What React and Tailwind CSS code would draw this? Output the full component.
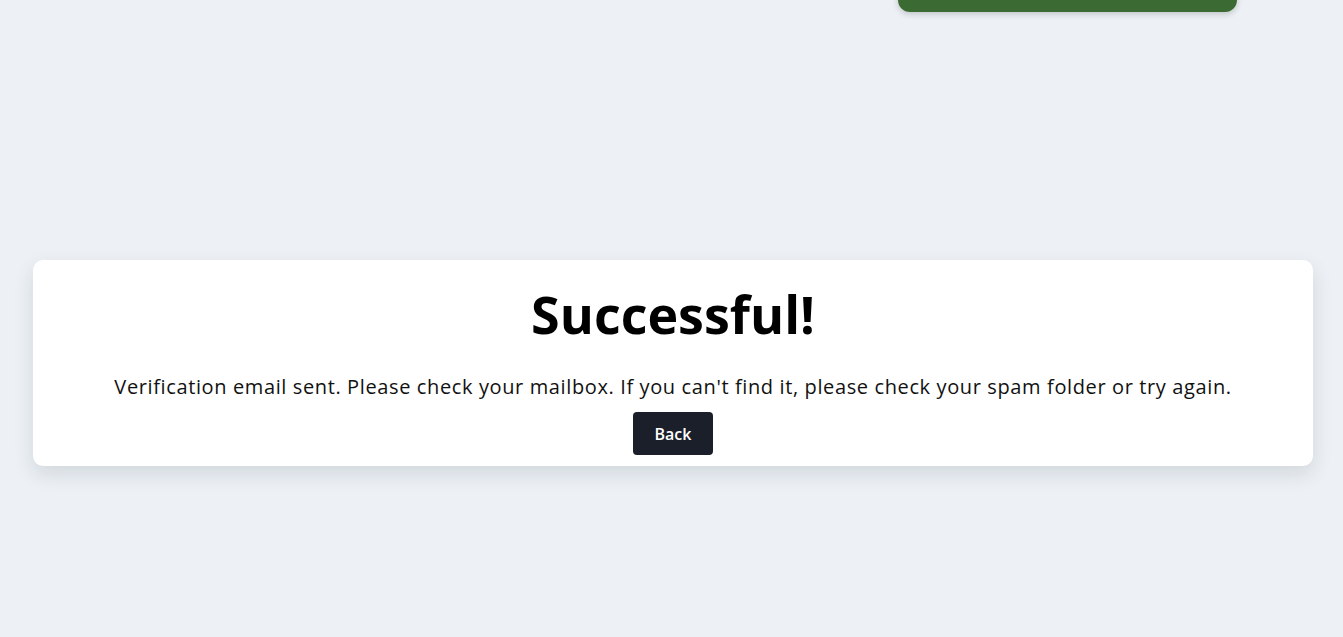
import React from 'react';

const SuccessCard = () => (
  <div className="flex flex-col items-center rounded-[10px] bg-white px-8 pt-[22px] pb-[11px] shadow-[0_8px_20px_rgba(15,30,60,0.12)]">
    <h1 className="text-[52px] font-bold leading-[64px] text-black">Successful!</h1>
    <p className="mt-[27px] text-[20px] leading-[28px] tracking-[0.62px] text-[#111]">
      Verification email sent. Please check your mailbox. If you can't find it, please check your spam folder or try again.
    </p>
    <button className="mt-[11px] h-[43px] w-[80px] rounded-[4px] bg-[#1b1f2a] text-[16px] font-semibold text-white">
      Back
    </button>
  </div>
);

export default function App() {
  return (
    <div
      className="relative min-h-[637px] overflow-hidden bg-[#edf1f5] pl-[33px] pr-[30px] pt-[260px]"
      style={{ fontFamily: '"Open Sans", sans-serif' }}
    >
      {/* toast sliding out at the top */}
      <div className="absolute left-[898px] top-[-40px] h-[52px] w-[339px] rounded-[12px] bg-[#3b6b33] shadow-[0_2px_6px_rgba(0,0,0,0.2)]" />
      <SuccessCard />
    </div>
  );
}
